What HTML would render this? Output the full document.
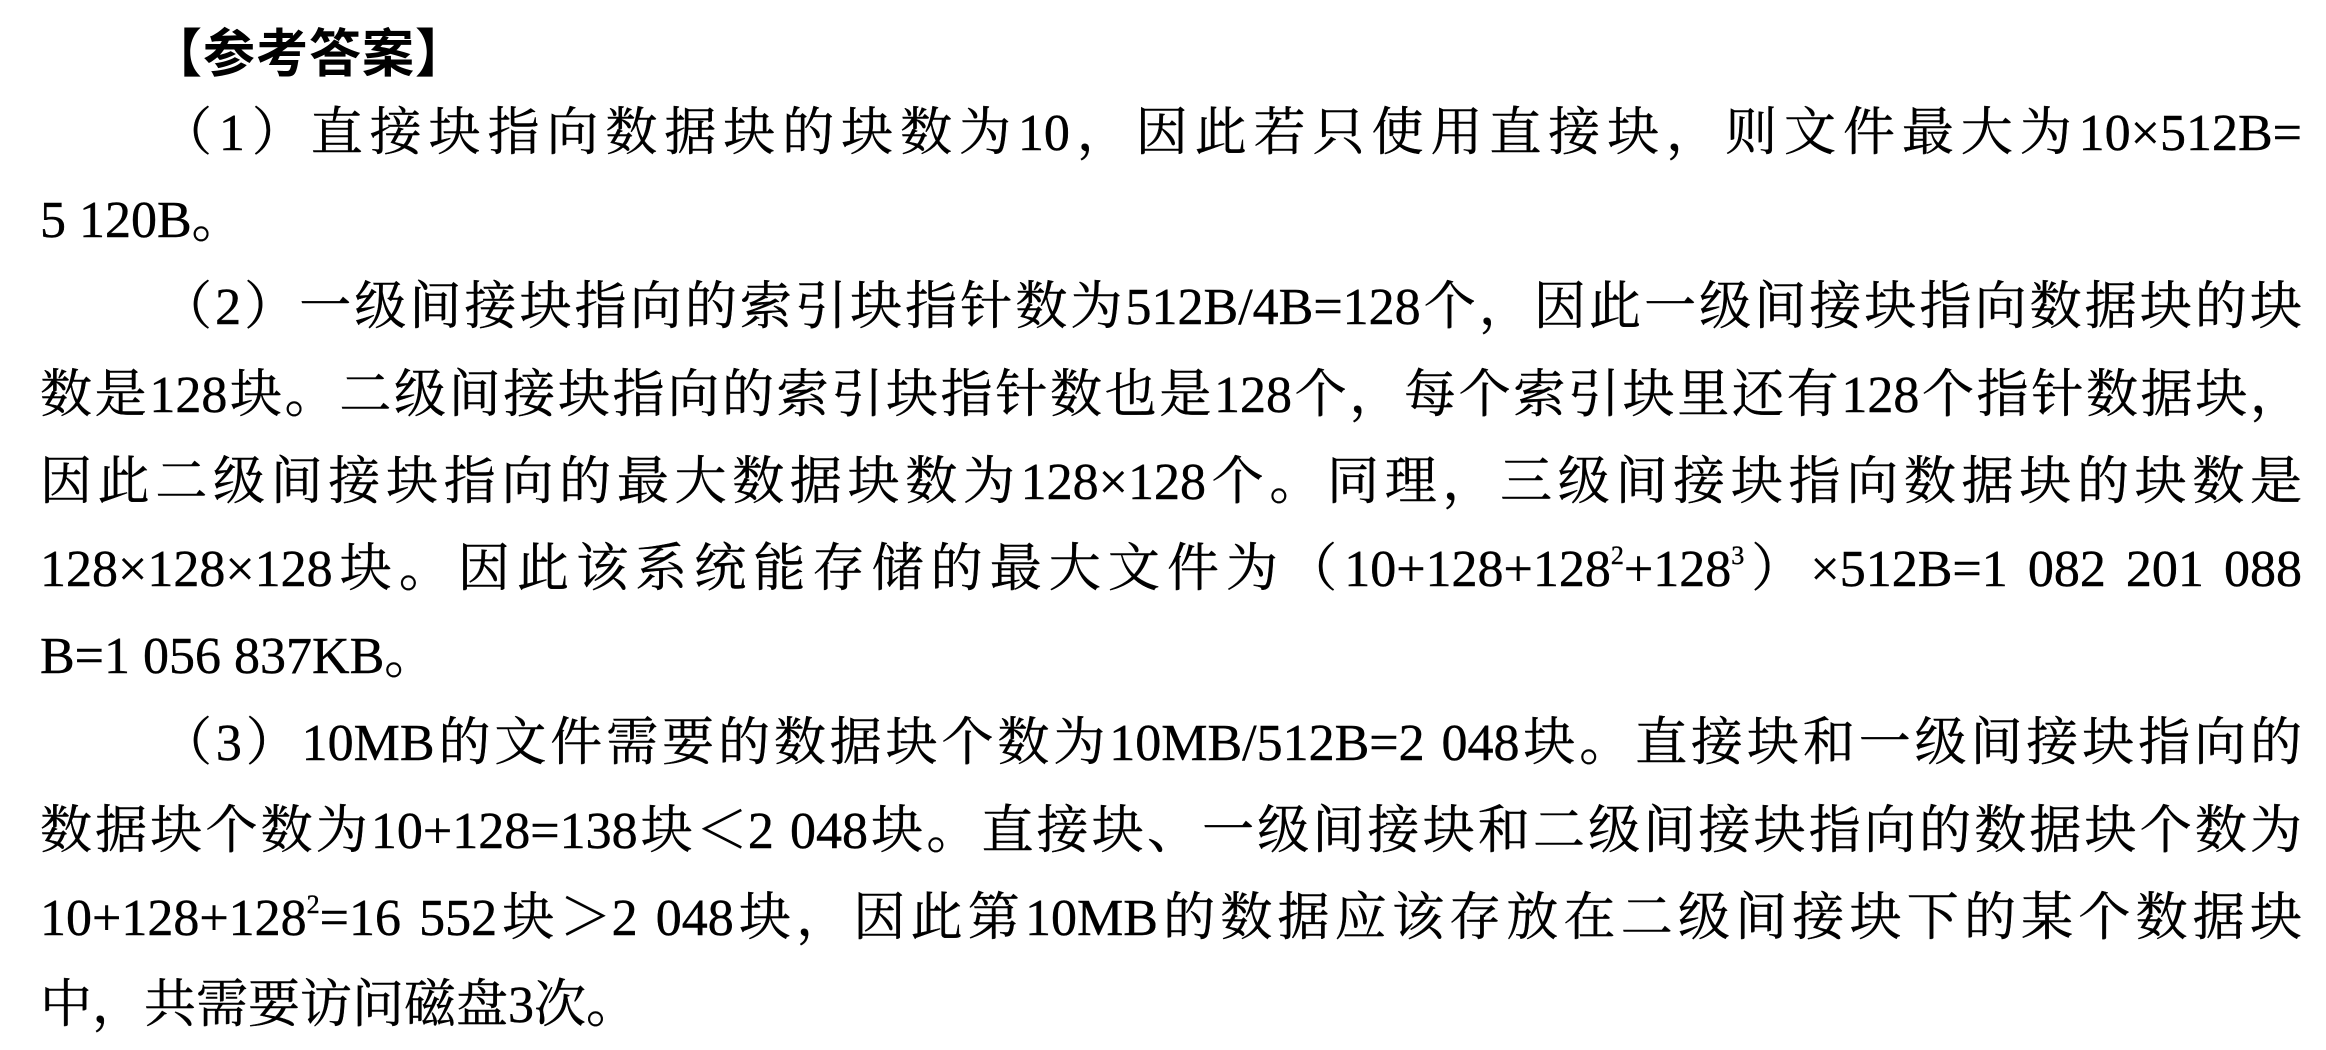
<!DOCTYPE html>
<html><head><meta charset="utf-8"><style>
html,body{margin:0;padding:0;background:#fff;}
body{width:2326px;height:1050px;overflow:hidden;position:relative;color:#000;}
.t{position:absolute;left:150px;top:8px;font:bold 52px/84px "Noto Sans CJK SC",sans-serif;letter-spacing:1px;}
.b{position:absolute;left:40px;top:90px;width:2262px;font-family:"Liberation Serif","Noto Serif CJK SC",serif;font-size:52px;line-height:87.2px;-webkit-text-stroke:0.4px #000;}
.l{height:87.2px;white-space:nowrap;text-align:justify;text-align-last:justify;overflow:visible}
.n{text-align-last:left}
.i{padding-left:120px}
sup{font-size:26px;line-height:0;vertical-align:22px}
</style></head><body>
<div class="t">【参考答案】</div>
<div class="b">
<div class="l i">（1）直接块指向数据块的块数为10，因此若只使用直接块，则文件最大为10×512B=</div>
<div class="l n">5 120B。</div>
<div class="l i">（2）一级间接块指向的索引块指针数为512B/4B=128个，因此一级间接块指向数据块的块</div>
<div class="l">数是128块。二级间接块指向的索引块指针数也是128个，每个索引块里还有128个指针数据块，</div>
<div class="l">因此二级间接块指向的最大数据块数为128×128个。同理，三级间接块指向数据块的块数是</div>
<div class="l">128×128×128块。因此该系统能存储的最大文件为（10+128+128<sup>2</sup>+128<sup>3</sup>）×512B=1 082 201 088</div>
<div class="l n">B=1 056 837KB。</div>
<div class="l i">（3）10MB的文件需要的数据块个数为10MB/512B=2 048块。直接块和一级间接块指向的</div>
<div class="l">数据块个数为10+128=138块＜2 048块。直接块、一级间接块和二级间接块指向的数据块个数为</div>
<div class="l">10+128+128<sup>2</sup>=16 552块＞2 048块，因此第10MB的数据应该存放在二级间接块下的某个数据块</div>
<div class="l n">中，共需要访问磁盘3次。</div>
</div>
</body></html>
